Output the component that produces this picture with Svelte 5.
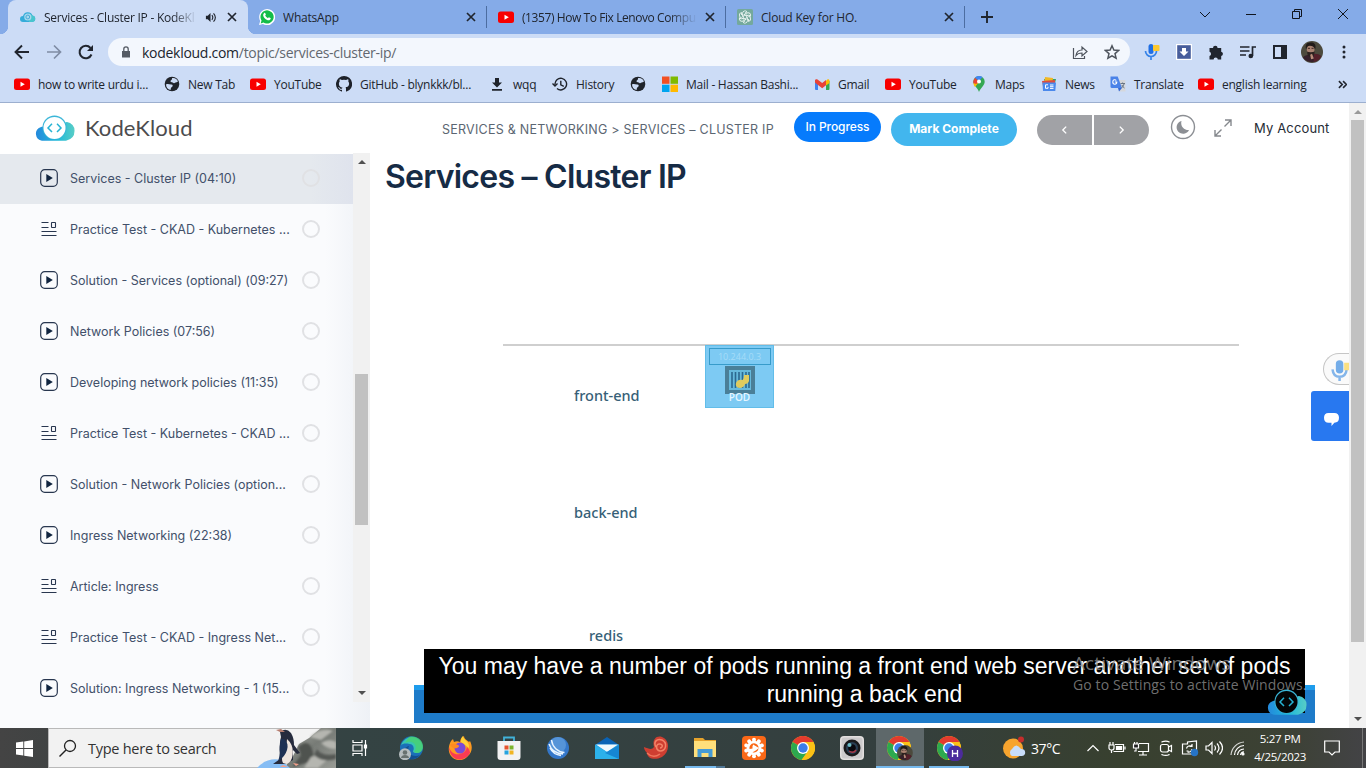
<script>
  const tabs = [
    { icon: 'cloud', title: 'Services - Cluster IP - KodeKl', active: true, sound: true, fade: true },
    { icon: 'whatsapp', title: 'WhatsApp' },
    { icon: 'youtube', title: '(1357) How To Fix Lenovo Compu', fade: true },
    { icon: 'gpt', title: 'Cloud Key for HO.' }
  ];
  const bookmarks = [
    { icon: 'youtube', label: 'how to write urdu i...', w: 150 },
    { icon: 'globe', label: 'New Tab', w: 86 },
    { icon: 'youtube', label: 'YouTube', w: 86 },
    { icon: 'github', label: 'GitHub - blynkkk/bl...', w: 153 },
    { icon: 'download', label: 'wqq', w: 63 },
    { icon: 'history', label: 'History', w: 78 },
    { icon: 'globe', label: '', w: 32 },
    { icon: 'microsoft', label: 'Mail - Hassan Bashi...', w: 152 },
    { icon: 'gmail', label: 'Gmail', w: 71 },
    { icon: 'youtube', label: 'YouTube', w: 86 },
    { icon: 'maps', label: 'Maps', w: 70 },
    { icon: 'news', label: 'News', w: 69 },
    { icon: 'translate', label: 'Translate', w: 88 },
    { icon: 'youtube', label: 'english learning', w: 120 }
  ];
  const lessons = [
    ['video', 'Services - Cluster IP (04:10)'],
    ['list', 'Practice Test - CKAD - Kubernetes ...'],
    ['video', 'Solution - Services (optional) (09:27)'],
    ['video', 'Network Policies (07:56)'],
    ['video', 'Developing network policies (11:35)'],
    ['list', 'Practice Test - Kubernetes - CKAD ...'],
    ['video', 'Solution - Network Policies (option...'],
    ['video', 'Ingress Networking (22:38)'],
    ['list', 'Article: Ingress'],
    ['list', 'Practice Test - CKAD - Ingress Net...'],
    ['video', 'Solution: Ingress Networking - 1 (15...']
  ];
  const apps = ['edge', 'firefox', 'store', 'globeblue', 'mail', 'shell', 'folder', 'orange', 'chrome', 'camera', 'chromeA', 'chromeH'];
  const tray = ['up', 'battery', 'network', 'meet', 'onedrive', 'volume', 'wifi'];
  const petals = [0, 36, 72, 108, 144, 180, 216, 252, 288, 324];
</script>

{#snippet chromeLogo()}
  <circle cx="12" cy="12" r="12" fill="#fbc116" />
  <path d="M12 12 1.6 6A12 12 0 0 1 22.4 6H12z" fill="#e33b2e" />
  <path d="M12 12 1.6 6a12 12 0 0 0 9 17.9L17 15z" fill="#2da94f" />
  <path d="M12 6h10.4a12 12 0 0 1-11.8 17.9L17.2 15z" fill="#fbc116" />
  <circle cx="12" cy="12" r="6" fill="#fff" />
  <circle cx="12" cy="12" r="4.7" fill="#3b7de9" />
{/snippet}

{#snippet portrait()}
  <circle cx="12" cy="12" r="12" fill="#4c4a3d" />
  <path d="M2 18a12 12 0 0 0 20-1c-2-3-5-2-8-3l-5 1c-3 0-5 1-7 3z" fill="#35202a" />
  <path d="M14 14c4 0 7 1 8 3a12 12 0 0 1-8 6z" fill="#54202a" />
  <ellipse cx="10.5" cy="9.5" rx="4.2" ry="5.600" fill="#a98271" />
  <path d="M5.500 9C4 2 8 1.500 11 1.500s6 1.500 4.500 7.500C14 5 9 4.500 7 6z" fill="#211b19" />
  <path d="M6.500 11.500c2 1 6 1 8.500 0-.5 4-2 6-4.500 6s-3.500-2-4-6z" fill="#2b211f" />
  <path d="M7.500 8h2.300M11.500 8h2.300" stroke="#33221d" />
  <path d="m10 15 2-1 2 5-3 1z" fill="#b98c7a" />
{/snippet}

{#snippet cloudLogo(inner)}
  <svg viewBox="0 0 40 27" class="cloud">
    <defs><linearGradient id="cl" x1="0" x2="1"><stop offset="0" stop-color="#2489dc" /><stop offset=".55" stop-color="#20b9d9" /><stop offset="1" stop-color="#58cdc6" /></linearGradient></defs>
    <path d="M7 25.700a7 7 0 0 1-1.500-13.500Q7 11.300 9 11.500H29Q29 7 32 7a8.500 8.500 0 0 1 7.500 9q0 8-8.500 9.700z" fill="url(#cl)" />
    <circle cx="19.500" cy="12.600" r="12" fill="#3ab6d8" />
    <circle cx="19.500" cy="12.900" r="11" fill={inner} />
    <path d="m17 8.800-4 4.100 4 4.100M22 8.800l4 4.100-4 4.100" fill="none" stroke="#26b3d3" stroke-width="1.500" />
  </svg>
{/snippet}

{#snippet icon(name)}
  {#if name === 'cloud'}
    <svg viewBox="0 0 16 16"><path d="M3 13a3 3 0 0 1 0-6 5 5 0 0 1 9.500-.5A3.300 3.300 0 0 1 12.500 13z" fill="#35acd9" /><path d="M9 13V4l3.500 2.500A3.300 3.300 0 0 1 12.500 13z" fill="#49c5ce" /><circle cx="7.800" cy="8" r="3.600" fill="#a6d9ee" /><circle cx="7.800" cy="8" r="1.900" fill="none" stroke="#4aa9d8" /></svg>
  {:else if name === 'whatsapp'}
    <svg viewBox="0 0 16 16"><path d="M0 16 1.200 12A8 8 0 1 1 4 14.900z" fill="#fff" /><path d="m1.700 14.400.8-2.900A6.600 6.600 0 1 1 4.500 13.500z" fill="#13bd48" /><path d="M5 4.200c.5-.7 1.200-.4 1.400.2l.5 1.200-.7 1c.6 1.200 1.400 2 2.700 2.600l.9-.9 1.700.8c.6.3 0 1.600-.8 2-2.600 1-6.700-2.500-6.500-5.200 0-.7.300-1.200.8-1.700z" fill="#fff" /></svg>
  {:else if name === 'youtube'}
    <svg viewBox="0 0 16 16"><rect y="2.500" width="16" height="11.500" rx="2.500" fill="#f80000" /><path d="m6.500 5.800 4.300 2.500-4.300 2.500z" fill="#fff" /></svg>
  {:else if name === 'gpt'}
    <svg viewBox="0 0 16 16"><rect width="16" height="16" rx="1.500" fill="#74a99c" /><g fill="none" stroke="#e8f3ef" stroke-width=".9">{#each [0, 60, 120, 180, 240, 300] as r}<path d="M8 6 5.500 7.500V4.300A2.600 2.600 0 0 1 10 2.700L8 4" transform="rotate({r} 8 8)" />{/each}</g></svg>
  {:else if name === 'globe'}
    <svg viewBox="0 0 16 16"><circle cx="8" cy="8" r="7.300" fill="#20242b" /><path d="M2 8.500c2-1 3.500.2 5.500 0 1.500.2 1.500 1.500.5 2.500-1.500.5-1 2-1.500 3C3.500 13.500 2 11 2 8.500zM8 2c3-.5 5 1 6 3.500l-2 1c-1 0-1.500 1.200-2.500.5C8.500 6 7 6.500 6.500 5.500 6.500 4 8.500 4 8 2z" fill="#ccdcf6" /></svg>
  {:else if name === 'github'}
    <svg viewBox="0 0 16 16"><path d="M8 0a8 8 0 0 0-2.500 15.600c.4.100.5-.2.500-.4v-1.400c-2.200.5-2.700-1-2.700-1-.4-.9-.9-1.200-.9-1.200-.7-.5.100-.5.100-.5.800.100 1.200.8 1.200.8.700 1.300 1.900.9 2.300.7.100-.5.300-.9.500-1.100-1.800-.2-3.600-.9-3.600-4 0-.9.300-1.600.8-2.100-.100-.2-.4-1 .1-2.100 0 0 .7-.2 2.200.8a7.500 7.500 0 0 1 4 0c1.500-1 2.200-.8 2.200-.8.400 1.100.2 1.900.1 2.100.5.600.8 1.300.8 2.200 0 3-1.900 3.700-3.600 3.900.3.300.5.800.5 1.500v2.200c0 .2.100.5.600.4A8 8 0 0 0 8 0z" fill="#1d2129" /></svg>
  {:else if name === 'download'}
    <svg viewBox="0 0 16 16" fill="#1f232b"><path d="M6 2h4v4.500h3l-5 5-5-5h3zM3 13h10v1.700H3z" /></svg>
  {:else if name === 'history'}
    <svg viewBox="0 0 16 16" fill="none" stroke="#1f232b" stroke-width="1.400"><path d="M3 8.500a5.800 5.800 0 1 1 2 4M.5 7.500 3 10l2.500-2.500M8.800 4.800v4l3 1.500" /></svg>
  {:else if name === 'microsoft'}
    <svg viewBox="0 0 16 16"><path d="M0 .5h7.500v7.300H0z" fill="#f25022" /><path d="M8.500.5H16v7.300H8.500z" fill="#7fba00" /><path d="M0 8.700h7.500V16H0z" fill="#00a4ef" /><path d="M8.500 8.700H16V16H8.500z" fill="#ffb900" /></svg>
  {:else if name === 'gmail'}
    <svg viewBox="0 0 16 16"><path d="M1 4h3v10H2a1 1 0 0 1-1-1z" fill="#3f83ee" /><path d="M12 5h3.500v8a1 1 0 0 1-1 1H12z" fill="#34a853" /><path d="m12 5 1.300-1.500c1-.7 2.200 0 2.200 1.200V7L12 9.500z" fill="#fbbc04" /><path d="m1 4.500c.2-1.300 1.500-1.700 2.500-1L8.200 7 12 4v5.300l-3.800 3L4 9 1 6.500z" fill="#e94235" /></svg>
  {:else if name === 'maps'}
    <svg viewBox="0 0 16 16"><path d="M8 0a5.700 5.700 0 0 1 5.700 5.700C13.700 9 9.500 12 8 16 7 12 2.300 9.500 2.300 5.700A5.700 5.700 0 0 1 8 0z" fill="#34a853" /><path d="M2.500 7 8 6l-4 5C3 9.500 2.500 8.500 2.500 7z" fill="#fbbc04" /><path d="M8 0C6 0 4.800.8 4 1.800l4 3.500L11.500 1A6 6 0 0 0 8 0z" fill="#4285f4" /><path d="M4 1.800 2.300 5v2l3 1L8 5.500z" fill="#ea4335" /><circle cx="8" cy="5.600" r="2" fill="#fff" /></svg>
  {:else if name === 'news'}
    <svg viewBox="0 0 16 16"><path d="M3 3h12l-2 8H5z" fill="#33a164" /><path d="m4 1 8 1-1 8H3z" fill="#f1b824" /><path d="m1 5 13-1v6H2z" fill="#de4c3f" /><path d="M1.500 6.500H15l-.7 8.500H2z" fill="#4b89ec" /><path d="M7 8.800H4.500v3.500H7v-1.500M9 9h3.500M9 10.700h3.500M9 12.400h3.500" fill="none" stroke="#fff" /></svg>
  {:else if name === 'translate'}
    <svg viewBox="0 0 16 16"><path d="M6 4h9.500v11.500H9z" fill="#d5d7db" /><path d="M.5.500h7.200L12 12H2a1.500 1.500 0 0 1-1.500-1.500z" fill="#4a82e8" /><path d="m8 12h4l-3 3.500z" fill="#3367d6" /><path d="M4.800 6h2c0 3-4 3-4 0 0-2.200 2.200-3 3.500-1.500" fill="none" stroke="#fff" stroke-width="1.100" /><path d="M10.500 7.500h4.500M12.600 6.500v1M14 8c-.5 2-1.500 3-2.500 4M12 9c.5 1.500 1.500 2.500 2.500 3" fill="none" stroke="#697584" /></svg>
  {/if}
{/snippet}

{#snippet appIcon(name)}
  {#if name === 'edge'}
    <svg viewBox="0 0 24 24"><circle cx="12.500" cy="11.800" r="11.500" fill="#1b6fb8" /><path d="M2 9C6 0 16-2 22 6c3 6 1 10-3 11-4 .5-6-1-4.500-3 1-3-1-6-4-6-5-1-7 0-8.500 1z" fill="#37c5b3" /><path d="M10 1c8-2 15 4 14 11-1 5-6 6-9 4 5-7-2-13-9-9z" fill="#4bd16c" opacity=".75" /><path d="M10 10c-3 7 3 12 11 9-4 5-11 6-16 0-2-4 1-8 5-9z" fill="#124f91" /><circle cx="6" cy="18.200" r="6" fill="#b5bcbe" /><circle cx="6" cy="16.500" r="2.300" fill="#68716f" /><path d="M2 22c0-4 8-4 8 0z" fill="#68716f" /></svg>
  {:else if name === 'firefox'}
    <svg viewBox="0 0 24 24"><path d="M3 5l2-2 1 3c2-1 4-1 6 0 0-3 2-5 4-6 0 3 3 4 5 6l1-1c3 6 2 11-2 15-5 6-13 5-17 0C0 16 0 10 3 5z" fill="#ff9a20" /><path d="M1 11c2 6 6 8 11 7 4-1 6-3 7-7 2 2 3 4 3 6-4 7-13 9-18 3-2-3-3-6-3-9z" fill="#fa3b53" /><path d="M15 0c0 4 7 5 6 12l-4-3-4-3c0-3 0-4 2-6z" fill="#ffd338" /><circle cx="12" cy="12" r="5.500" fill="#7a4bd6" /><path d="M2 9c3-2 5-1 8 0 2 1 1 2-1 3-4 1-5-1-7-3z" fill="#ff8a22" /></svg>
  {:else if name === 'store'}
    <svg viewBox="0 0 24 24"><path d="M7 6V1.500h10V6" fill="none" stroke="#41b2d9" stroke-width="1.800" /><path d="M.5 5h23v16a3 3 0 0 1-3 3h-17a3 3 0 0 1-3-3z" fill="#f2f2f3" /><path d="M7.500 9.500h4v4h-4z" fill="#e5532d" /><path d="M12.500 9.500h4v4h-4z" fill="#7ab42d" /><path d="M7.500 14.500h4v4h-4z" fill="#25a3df" /><path d="M12.500 14.500h4v4h-4z" fill="#f1b522" /></svg>
  {:else if name === 'globeblue'}
    <svg viewBox="0 0 24 24"><circle cx="12" cy="12" r="11" fill="#3477c9" /><circle cx="12" cy="9" r="8" fill="#6da8e2" opacity=".6" /><path d="M3 8c2 6 7 9.500 14 10M5.500 4c1 7 6 12 13 12.500M4 12c2 4 6 7 11 7.500" fill="none" stroke="#e7f4ff" stroke-width="1.500" /></svg>
  {:else if name === 'mail'}
    <svg viewBox="0 0 24 24"><path d="m0 9 12-8 12 8-12 8z" fill="#0a63b5" /><path d="M0 8.500h24V23H0z" fill="#26a3e5" /><path d="M1 8.500h22L12 16z" fill="#f0f8fc" /><path d="m0 9 24 14H0z" fill="#2cb1ea" /><path d="M24 9 10 17l14 6z" fill="#1686d2" /></svg>
  {:else if name === 'shell'}
    <svg viewBox="0 0 24 24"><path d="M0 11c5 2 8 3 10 0C8 4 12-1 18 1c8 3 8 15 0 20C10 25 3 22 3 17c-2-2-3-4-3-6z" fill="#ce3e31" /><path d="M12 11c-3-5 1-9 6-7 6 3 4 11-2 11-5-1-4-8 0-7 4 1 2 4 0 4" fill="none" stroke="#f38368" stroke-width="1.500" /><path d="M3 17c4 4 9 4 13 1" stroke="#ee765c" fill="none" stroke-width="1.500" /></svg>
  {:else if name === 'folder'}
    <svg viewBox="0 0 24 24"><path d="M1 2h9l2 2h11v17H1z" fill="#e6a32c" /><path d="M1 5h22v16H1z" fill="#ffdf7b" /><path d="M4.500 13h15v8h-4v-4h-7v4h-4z" fill="#469bd5" /></svg>
  {:else if name === 'orange'}
    <svg viewBox="0 0 24 24"><rect width="24" height="24" rx="4" fill="#fa6817" />{#each petals as p}<circle cx="12" cy="3.800" r="2" fill="#fff" transform="rotate({p} 12 12)" />{/each}<circle cx="12" cy="12" r="7.300" fill="#fff" /><path d="M7.500 13a4.600 4.600 0 1 1 3 3.300L13 15l4-3-6-3.500v4z" fill="#fa6817" /><path d="m10.500 9.500 4.500 2.500-4.500 2.500z" fill="#fff" /></svg>
  {:else if name === 'chrome'}
    <svg viewBox="0 0 24 24">{@render chromeLogo()}</svg>
  {:else if name === 'camera'}
    <svg viewBox="0 0 24 24"><rect width="24" height="24" rx="4" fill="#e2dfde" /><rect x="1.500" y="1.500" width="21" height="21" rx="3" fill="#cccacb" /><circle cx="12" cy="12" r="8.500" fill="#19191b" /><circle cx="12" cy="12" r="6" fill="#283e53" /><circle cx="12" cy="12" r="3.800" fill="#09090e" /><path d="M9 15c3 2 5 2 7-1" fill="none" stroke="#ab3746" stroke-width="1.400" /><circle cx="9.500" cy="9" r="2" fill="#6dbdc7" /></svg>
  {:else if name === 'chromeA'}
    <svg viewBox="0 0 26 26"><g transform="translate(0 1)">{@render chromeLogo()}</g><g transform="translate(10 10) scale(.66)">{@render portrait()}</g></svg>
  {:else}
    <svg viewBox="0 0 26 26"><g transform="translate(0 1)">{@render chromeLogo()}</g><circle cx="18" cy="18.500" r="8" fill="#4c2b9c" /><path d="M15.500 15v7M20.500 15v7M15.500 18.500h5" stroke="#fff" stroke-width="1.300" /></svg>
  {/if}
{/snippet}

{#snippet trayIcon(name)}
  <svg viewBox="0 0 18 18" fill="none" stroke="#fff" stroke-width="1.200">
    {#if name === 'up'}<path d="m3.500 12 5.500-5.500 5.500 5.500" />
    {:else if name === 'battery'}<path d="M7 5.500h8.500v7H5.500M17 7.500v3M1 6h5v3a2 2 0 0 1-2 2H3a2 2 0 0 1-2-2zM2 6V3M5 6V3M3.500 11v3" /><path d="M8.500 7.500h5v3h-5z" fill="#fff" />
    {:else if name === 'network'}<path d="M7 4.500h9.500v8H6M11 12.500V16M7 16h8" /><path d="M1.500 5h5v4h-5zM4 9v3H2M2.500 5V3M5 5V3" fill="#222" />
    {:else if name === 'meet'}<rect x="3.500" y="5.500" width="8" height="7.500" rx="2" /><path d="m11.500 8 3-1.500v6l-3-1.500M5 3.500V2.800q4-1.500 7 0v.7M5 15v.7q4 1.500 7 0V15" />
    {:else if name === 'onedrive'}<path d="M1.500 5v10h14V2l-9 1v2zM1.500 5h5" /><path d="M5.500 9.500a3.500 3.500 0 0 1 5.500-2M11 5v2.500H8.500M5.500 12h2M11 10a3.500 3.500 0 0 1-4.500 3" /><circle cx="13.500" cy="13.500" r="3.700" fill="#2674c6" stroke="none" />
    {:else if name === 'volume'}<path d="M1 7h2.500L7 3.500v11L3.500 11H1zM9.500 6.500q2 2.500 0 5M12 4.500q4 4.500 0 9M14.500 2.500q6 6.500 0 13" />
    {:else}<path d="M2 16A14 14 0 0 1 15 3" opacity=".8" /><path d="M5.500 16A10 10 0 0 1 15 6.500M8.500 16A7 7 0 0 1 15 10M11.500 16a4 4 0 0 1 3.500-3.200" /><circle cx="14" cy="15" r="1" fill="#fff" />{/if}
  </svg>
{/snippet}

<div class="screen">
  <div class="tabstrip">
    {#each tabs as tab, i}
      <div class="tab t{i}" class:active={tab.active}>
        <span class="ic">{@render icon(tab.icon)}</span>
        <span class="title" class:fade={tab.fade}>{tab.title}</span>
        {#if tab.sound}
          <svg class="sound" viewBox="0 0 12 12"><path d="M1 4h2l3-3v10L3 8H1z" fill="#20252e" /><path d="M7.500 3.500q2 2.500 0 5M9.300 1.500q4 4.500 0 9" fill="none" stroke="#20252e" stroke-width="1.200" /></svg>
        {/if}
        <svg class="x" viewBox="0 0 10 10"><path d="m1 1 8 8M9 1 1 9" stroke="#20252e" stroke-width="1.700" /></svg>
      </div>
    {/each}
    <svg class="plus" viewBox="0 0 12 12"><path d="M6 0v12M0 6h12" stroke="#20252e" stroke-width="1.900" /></svg>
    <div class="wincontrols">
      <svg viewBox="0 0 12 12"><path d="m1 4 5 5 5-5" /></svg>
      <svg viewBox="0 0 12 12"><path d="M1 6.500h10" /></svg>
      <svg viewBox="0 0 12 12"><path d="M1.500 3.500h7v7h-7zM3.500 3.500v-2h7v7h-2" /></svg>
      <svg viewBox="0 0 12 12"><path d="m1 1 10 10M11 1 1 11" /></svg>
    </div>
  </div>

  <div class="toolbar">
    <svg class="nav" viewBox="0 0 16 16"><path d="M15 8H2M8 1.500 1.500 8 8 14.500" fill="none" stroke="#20252e" stroke-width="1.900" /></svg>
    <svg class="nav" viewBox="0 0 16 16"><path d="M1 8h13M8 1.500 14.500 8 8 14.500" fill="none" stroke="#7f8ca4" stroke-width="1.700" /></svg>
    <svg class="nav" viewBox="0 0 16 16"><path d="M13.500 10.500A6.200 6.200 0 1 1 12.500 4" fill="none" stroke="#20252e" stroke-width="2" /><path d="M15 1v6H9z" fill="#20252e" /></svg>
    <div class="omnibox">
      <svg class="lock" viewBox="0 0 10 12"><path d="M1 5h8v6.500H1z" fill="#555b64" /><path d="M2.800 5V3a2.200 2.200 0 0 1 4.400 0v2" fill="none" stroke="#555b64" stroke-width="1.300" /></svg>
      <span class="url">kodekloud.com<em>/topic/services-cluster-ip/</em></span>
      <svg class="share" viewBox="0 0 16 16" fill="none" stroke="#4e545d" stroke-width="1.200"><path d="M1.500 4v10.500h11V12" /><path d="M4 11.500c.5-4 3-5.500 6-5.500V3l5 4.500-5 4.500V9c-2.500 0-4.500.5-6 2.500z" /></svg>
      <svg class="star" viewBox="0 0 16 16" fill="none" stroke="#4e545d" stroke-width="1.500"><path d="m8 1.800 1.900 4.300 4.700.4-3.600 3.100 1.100 4.600L8 11.800l-4.100 2.400L5 9.600 1.400 6.500l4.700-.4z" /></svg>
    </div>
    <div class="exts">
      <svg viewBox="0 0 16 16"><rect x="4.500" y="0" width="5" height="10" rx="2.500" fill="#1f6fe5" /><path d="M1.500 7a5.500 5.500 0 0 0 11 0M7 12.500V16" fill="none" stroke="#3583e8" stroke-width="1.700" /><rect x="9" y="1" width="6.500" height="6" rx="1" fill="#fcc82e" /></svg>
      <svg viewBox="0 0 16 16"><path d="M0 0h16v16H0z" fill="#fff" /><path d="M1.200 1.200h13.600v13.600H1.200z" fill="#475d9b" /><path d="M6 4h4v3.500h2.500L8 12 3.500 7.500H6z" fill="#fff" /></svg>
      <svg viewBox="0 0 16 16"><path d="M1.500 4H5a2.300 2.300 0 0 1 4.600 0h3.600v3.700a2.200 2.200 0 0 1 0 4.300v3.500H9.800a2.100 2.100 0 0 0-4.200 0H1.500V12a2.200 2.200 0 0 0 0-4.200z" fill="#20252e" /></svg>
      <svg viewBox="0 0 16 16" fill="none" stroke="#20252e" stroke-width="1.700"><path d="M0 3h9.500M0 7h9.500M0 11h6M12.500 12V3H16" /><circle cx="10.800" cy="12" r="1.500" fill="#20252e" /></svg>
      <svg viewBox="0 0 16 16"><path d="M2 2h12v12H2z" fill="none" stroke="#20252e" stroke-width="2" /><path d="M9 1h6v14H9z" fill="#20252e" /></svg>
      <svg class="me" viewBox="0 0 24 24">{@render portrait()}</svg>
      <svg viewBox="0 0 16 16" fill="#20252e"><circle cx="8" cy="3" r="1.500" /><circle cx="8" cy="8" r="1.500" /><circle cx="8" cy="13" r="1.500" /></svg>
    </div>
  </div>

  <div class="bookmarks">
    {#each bookmarks as b}
      <div class="bm" style:width="{b.w}px"><span class="ic">{@render icon(b.icon)}</span><span>{b.label}</span></div>
    {/each}
    <svg class="more" viewBox="0 0 8 8"><path d="m.8 1 3 3-3 3M4.500 1l3 3-3 3" fill="none" stroke="#20252e" stroke-width="1.400" /></svg>
  </div>

  <div class="page">
    <div class="site">
      <header>
        <span class="logo">{@render cloudLogo('#fff')}</span>
        <span class="brand">KodeKloud</span>
        <span class="crumbs">SERVICES &amp; NETWORKING &gt; SERVICES – CLUSTER IP</span>
        <span class="progress">In Progress</span>
        <span class="complete">Mark Complete</span>
        <div class="pager">
          <span><svg viewBox="0 0 8 8"><path d="M5.500 1 2.500 4l3 3" /></svg></span>
          <span><svg viewBox="0 0 8 8"><path d="m2.500 1 3 3-3 3" /></svg></span>
        </div>
        <svg class="moon" viewBox="0 0 26 26"><circle cx="13" cy="13" r="11.500" fill="none" stroke="#8c8f94" stroke-width="1.400" /><path d="M11.500 7a7 7 0 0 0 7.500 9 6.500 6.500 0 1 1-7.500-9z" fill="#8c8f94" /></svg>
        <svg class="expand" viewBox="0 0 18 18" fill="none" stroke="#85888d" stroke-width="1.400"><path d="M1 17 7.500 10.500M10.500 7.500 17 1M11 1h6v6M1 11v6h6" /></svg>
        <span class="account">My Account</span>
      </header>
      <div class="body">
        <aside>
          <div class="lessons">
            {#each lessons as [kind, label], i}
              <div class="lesson" class:current={i === 0}>
                {#if kind === 'video'}
                  <svg class="li" viewBox="0 0 18 18"><rect x=".7" y=".7" width="16.600" height="16.600" rx="4" fill="none" stroke="#28364f" stroke-width="1.200" /><path d="M6.300 5v8l6.500-4z" fill="#10243f" /></svg>
                {:else}
                  <svg class="li" viewBox="0 0 18 18" fill="none" stroke="#28364f" stroke-width="1.100"><path d="M1.500 2.500h7M1.500 7.500h7M1.500 11.500h15M1.500 15.500h15" /><rect x="11.500" y="2.500" width="4" height="5" rx=".5" /></svg>
                {/if}
                <span>{label}</span><i></i>
              </div>
            {/each}
          </div>
          <div class="sidebar-scroll"><b class="up"></b><div></div><b class="down"></b></div>
        </aside>
        <main>
          <h1>Services – Cluster IP</h1>
          <div class="video">
            <div class="rule"></div>
            <span class="tier front">front-end</span>
            <span class="tier back">back-end</span>
            <span class="tier redis">redis</span>
            <div class="pod">
              <span class="addr">10.244.0.3</span>
              <svg viewBox="0 0 30 28"><path d="M2 2h26v24H2z" fill="#66b9dc" stroke="#4a7f98" stroke-width="4" /><path d="M7 6v16M10.500 6v16M14 6v16M17.500 6v16M21 6v16M24 6v16" stroke="#2b688f" stroke-width="1.600" /><path d="M19 9h5v6q-1 3-4 3-1 4-6 4-4-1-3-5 2-4 6-3 2 0 2-5z" fill="#dfcb5e" /></svg>
              <strong>POD</strong>
            </div>
            <div class="bluebar"></div>
            <p class="caption">You may have a number of pods running a front end web server another set of pods<br />running a back end</p>
            <div class="watermark"><div>Activate Windows</div><p>Go to Settings to activate Windows.</p></div>
            <span class="badge">{@render cloudLogo('#030506')}</span>
          </div>
          <div class="mic"><svg viewBox="0 0 24 26"><rect x="7" y="0" width="9" height="16" rx="4.500" fill="#74ade9" /><path d="M3 11q1 9 8.500 9T20 11M11.500 20v5" fill="none" stroke="#85b6ea" stroke-width="3" /><path d="M17 3h8v9h-8z" fill="#fbe082" /></svg></div>
          <div class="chat"><svg viewBox="0 0 18 16"><path d="M6 1h6q5 0 5 5.200T12 11.500L9 15v-3.500H6Q1 11.500 1 6.200T6 1z" fill="#fff" /></svg></div>
        </main>
      </div>
    </div>
    <div class="page-scroll"><b class="up"></b><div></div><b class="down"></b></div>
  </div>

  <div class="taskbar">
    <div class="start"><svg viewBox="0 0 17 17"><path d="M0 2.500 7.300 1.500v6.600H0zM8.200 1.400 17 0v8.100H8.200zM0 9h7.300v6.600L0 14.600zM8.200 9H17v8l-8.800-1.300z" fill="#fff" /></svg></div>
    <div class="search">
      <svg class="glass" viewBox="0 0 18 18"><circle cx="11" cy="7" r="5.500" fill="none" stroke="#222" stroke-width="1.300" /><path d="m7 11-6.500 6.500" stroke="#222" stroke-width="1.400" /></svg>
      <span>Type here to search</span>
      <svg class="penguin" viewBox="0 0 80 40">
        <defs><linearGradient id="rock" x1="0" y1="0" x2="1" y2="1"><stop offset="0" stop-color="#a8aaa3" /><stop offset=".5" stop-color="#777b76" /><stop offset="1" stop-color="#999c96" /></linearGradient><filter id="soft"><feGaussianBlur stdDeviation=".8" /></filter></defs>
        <path d="M80 0H65L53 10 43 16 37 28 28 40h52z" fill="url(#rock)" />
        <g filter="url(#soft)"><path d="M42 19q10-9 14 2t-6 14l-14 4 9-12z" fill="#50534f" /><path d="M54 9Q65-1 77 3L65 12zM65 15q8-5 15-1v7q-9 0-15-6zM55 29q12-4 15 4l-8 7H48z" fill="#b5b6b0" />
        <path d="M61 21q5 8 19 5v5q-14 4-22-4z" fill="#555855" /></g>
        <path d="M1 40q10-11 24-8l9 8z" fill="#86bdf4" />
        <path d="M24 4q6-5 11 1 3 5 3 12l6 8-3 1-4-4v10l-8 4-12 0 7-5q-1-15 1-22z" fill="#262b3d" /><path d="M31 11q8 7 5 19-3 8-9 5-2-3 0-10 4-8 4-14z" fill="#eee5df" /><path d="M25 11q-2 8-1 14-1 6-2 8 7-4 9-11 2-7-3-11z" fill="#1e3154" /><path d="m24 4-4-2 5-1 4 3z" fill="#b67d6f" /><path d="m27 37-3 2h8zM37 35l6 1-3 2" fill="#f1a08a" />
      </svg>
    </div>
    <div class="taskview"><svg viewBox="0 0 16 16" fill="none" stroke="#fff" stroke-width="1.200"><path d="M1 0v2.500h9V0M1 16v-2.500h9V16M1 5h9v6H1zM13.500 0v16" /><path d="M12.500 5h2v3h-2z" fill="#fff" /></svg></div>
    <div class="apps">
      {#each apps as a}
        <div class="app {a}">{@render appIcon(a)}</div>
      {/each}
    </div>
    <div class="weather"><svg viewBox="0 0 24 24"><circle cx="11" cy="12.500" r="10" fill="#f7a42e" /><circle cx="19" cy="3.500" r="3" fill="#c52e2c" /><path d="M10 20a4 4 0 0 1 0-7q4-7 9 0 5 0 4 5-1 2-3 2z" fill="#c8ddfa" /></svg><span>37°C</span></div>
    <div class="tray">{#each tray as t}{@render trayIcon(t)}{/each}</div>
    <div class="clock"><span>5:27 PM</span><span>4/25/2023</span></div>
    <svg class="notify" viewBox="0 0 16 16"><path d="M.7 1h14.600v11H11l-3 3-3-3H.7z" fill="none" stroke="#fff" stroke-width="1.200" /></svg>
    <div class="peek"></div>
  </div>
</div>

<style>
  :global(body) { margin: 0; }
  .screen { width: 1366px; height: 768px; display: flex; flex-direction: column; overflow: hidden; font-family: "Open Sans", sans-serif; color: #20252e; }
  .screen :global(svg) { display: block; flex: none; }
  .screen span { white-space: nowrap; }
  .tabstrip { height: 34px; background: #85abe8; display: flex; align-items: center; padding-left: 8px; flex: none; }
  .tab { height: 34px; box-sizing: border-box; display: flex; align-items: center; font-size: 12px; letter-spacing: -.2px; width: 239px; padding: 0 10px 0 9px; position: relative; }
  .tab.active { background: #ccdcf6; border-radius: 8px 8px 0 0; width: 240px; padding-right: 11px; padding-left: 12px; }
  .tab.active::before, .tab.active::after { content: ''; position: absolute; bottom: 0; width: 8px; height: 8px; }
  .tab.active::before { left: -8px; background: radial-gradient(circle at 0 0, #85abe8 8px, #ccdcf6 8.500px); }
  .tab.active::after { right: -8px; background: radial-gradient(circle at 100% 0, #85abe8 8px, #ccdcf6 8.500px); }
  .tab.t1 { width: 238px; padding-right: 10px; padding-left: 11px; }
  .tab.t2 { padding-left: 11px; }
  .tab.t2, .tab.t3 { border-left: 1px solid #4c6da1; border-image: linear-gradient(#85abe8 20%, #4c6da1 20% 80%, #85abe8 80%) 1; }
  .tab.t3 { padding-left: 11px; border-right: 1px solid; width: 240px; }
  .ic { width: 16px; height: 16px; flex: none; margin-right: 8px; }
  .title { flex: 1; overflow: hidden; margin-right: 8px; }
  .title.fade { mask-image: linear-gradient(90deg, #000 84%, transparent); }
  .t0 .title { letter-spacing: -.25px; }
  .t2 .title { letter-spacing: -.42px; margin-right: 8px; }
  .sound { width: 11px; height: 11px; margin-right: 11px; }
  .x { width: 10px; height: 10px; }
  .plus { width: 12px; height: 12px; margin-left: 16px; }
  .wincontrols { margin-left: auto; display: flex; gap: 34px; padding-right: 17px; margin-top: -6px; }
  .wincontrols svg { width: 12px; height: 12px; fill: none; stroke: #10151e; stroke-width: 1; }
  .toolbar { height: 36px; background: #ccdcf6; display: flex; align-items: center; padding-left: 14px; flex: none; }
  .nav { width: 16px; height: 16px; margin-right: 16px; }
  .omnibox { width: 1022px; height: 28px; background: #f3f7fd; border-radius: 14px; display: flex; align-items: center; box-sizing: border-box; padding: 0 10px 0 13px; margin-left: -2px; }
  .lock { width: 10px; height: 12px; margin-right: 11px; }
  .url { font-size: 14px; letter-spacing: -.28px; flex: 1; }
  .url em { font-style: normal; color: #62676f; }
  .share { width: 16px; height: 16px; margin-right: 16px; }
  .star { width: 16px; height: 16px; }
  .exts { display: flex; align-items: center; gap: 16px; padding-left: 14px; }
  .exts svg { width: 16px; height: 16px; }
  .exts .me { width: 22px; height: 22px; margin: 0 -3px; }
  .bookmarks { height: 32px; box-sizing: content-box; border-bottom: 1px solid #9cafcf; background: #ccdcf6; display: flex; align-items: center; padding-left: 14px; font-size: 12px; letter-spacing: -.25px; flex: none; }
  .bm { display: flex; align-items: center; height: 28px; margin-top: -4px; flex: none; }
  .more { width: 9px; height: 9px; margin-left: 20px; margin-top: -4px; }
  .page { flex: 1; display: flex; min-height: 0; background: #fff; }
  .site { width: 1349px; display: flex; flex-direction: column; }
  header { height: 51px; display: flex; align-items: flex-start; font-family: Inter, sans-serif; flex: none; }
  .logo { width: 40px; height: 27px; margin: 12px 0 0 35px; }
  .brand { font-family: Lato, sans-serif; font-size: 22px; line-height: 26px; letter-spacing: .1px; color: #4c4c4e; width: 107px; margin: 12px 0 0 10px; }
  .crumbs { margin: 18px 0 0 250px; width: 332px; font-size: 12.500px; line-height: 17px; color: #5b6672; letter-spacing: .24px; }
  .progress { width: 87px; height: 30px; border-radius: 15px; background: #067bfc; color: #fff; font-size: 12px; letter-spacing: -.1px; font-weight: 500; line-height: 30px; text-align: center; margin: 9px 0 0 20px; }
  .complete { width: 126px; height: 33px; border-radius: 17px; background: #42b6ee; color: #fff; font-size: 12px; font-weight: 700; line-height: 32px; text-align: center; margin: 10px 0 0 10px; }
  .pager { display: flex; gap: 2px; margin: 12px 0 0 20px; }
  .pager span { width: 55px; height: 30px; background: #a1a2a6; border-radius: 15px 0 0 15px; display: grid; place-items: center; }
  .pager span + span { border-radius: 0 15px 15px 0; }
  .pager svg { width: 9px; height: 10px; fill: none; stroke: #fff; stroke-width: 1.200; }
  .moon { width: 26px; height: 26px; margin: 11px 0 0 21px; }
  .expand { width: 18px; height: 18px; margin: 16px 0 0 18px; }
  .account { font-size: 13px; line-height: 18px; color: #252b35; margin: 16px 0 0 22px; letter-spacing: .15px; }
  .body { flex: 1; display: flex; min-height: 0; }
  aside { width: 370px; display: flex; background: linear-gradient(90deg, #fafbfd 88%, #eef1f6); flex: none; }
  .lessons { width: 353px; overflow: hidden; }
  .lesson { height: 51px; display: flex; align-items: flex-start; padding-top: 15px; padding-left: 40px; box-sizing: border-box; font-family: Inter, sans-serif; font-size: 12.500px; color: #42506a; }
  .lesson.current { background: linear-gradient(90deg, #e5e9ee 88%, #dfe3ed); background-size: 100% 50px; background-repeat: no-repeat; }
  .li { width: 18px; height: 18px; }
  .lesson span { margin-left: 12px; width: 232px; line-height: 19px; }
  .lesson i { width: 14px; height: 14px; border: 2px solid #e0e1e4; border-radius: 50%; flex: none; }
  .sidebar-scroll, .page-scroll { width: 17px; background: #f1f1f1; display: flex; flex-direction: column; align-items: center; }
  .sidebar-scroll { height: 549px; margin-top: -1px; }
  .sidebar-scroll div { width: 13px; height: 151px; background: #c1c1c1; margin-top: 210px; }
  .page-scroll div { width: 13px; height: 522px; background: #c1c1c1; margin-top: 6px; }
  b.up, b.down { border: 4px solid transparent; width: 0; height: 0; }
  b.up { border-bottom-color: #505050; border-top: 0; margin-top: 7px; }
  b.down { border-top-color: #505050; border-bottom: 0; margin-top: auto; margin-bottom: 7px; }
  .page-scroll b.up { border-bottom-color: #999; margin-top: 7px; }
  main { flex: 1; position: relative; }
  h1 { font-family: Inter, sans-serif; font-size: 32px; font-weight: 600; line-height: 38px; letter-spacing: -.75px; color: #162b45; margin: 4px 0 0 15px; }
  .video { position: absolute; inset: 0; }
  .rule { position: absolute; left: 133px; top: 190px; width: 736px; height: 2px; background: #cfcfcf; }
  .tier { position: absolute; left: 204px; font-family: "Noto Sans", sans-serif; font-size: 14.500px; font-weight: 500; line-height: 20px; color: #375f77; }
  .front { top: 231px; }
  .back { top: 348px; }
  .redis { left: 219px; top: 471px; }
  .pod { position: absolute; left: 335px; top: 191px; width: 69px; height: 63px; background: #7dcaf3; border: 1px solid #62bde9; box-sizing: border-box; display: flex; flex-direction: column; align-items: center; }
  .addr { width: 60px; height: 15px; border: 1px solid #379bca; font-size: 9px; line-height: 16px; color: #a5dcf8; text-align: center; margin-top: 2px; }
  .pod svg { width: 30px; height: 28px; margin-top: 1px; }
  .pod strong { color: #e7f6ff; font-size: 10px; line-height: 10px; font-weight: 600; margin-top: -2px; }
  .bluebar { position: absolute; left: 44px; top: 531px; width: 901px; height: 38px; background: linear-gradient(#1e9cec 5px, #1e7bc9 5px); }
  .caption { position: absolute; left: 54px; top: 495px; width: 881px; height: 64px; box-sizing: border-box; padding-top: 3px; margin: 0; background: #000; color: #fff; font: 23px/28px "Liberation Sans", sans-serif; text-align: center; white-space: nowrap; }
  .watermark { position: absolute; left: 703px; top: 496px; color: #8d8d8dcc; white-space: nowrap; }
  .watermark div { font-size: 19px; line-height: 26px; letter-spacing: .1px; }
  .watermark p { margin: 0; font-size: 14px; line-height: 18px; letter-spacing: .12px; }
  .badge { position: absolute; left: 897px; top: 535px; width: 40px; height: 27px; }
  .mic { position: absolute; right: 0; top: 199px; width: 26px; height: 32px; border: 1px solid #c6c6c6; border-right: 0; box-sizing: border-box; border-radius: 16px 0 0 16px; background: #fafafa; overflow: hidden; }
  .mic svg { width: 20px; height: 22px; margin: 6px 0 0 6px; }
  .chat { position: absolute; right: 0; top: 237px; width: 38px; height: 50px; background: #2878f0; border-radius: 3px 0 0 3px; display: grid; place-items: center; }
  .chat svg { width: 17px; height: 15px; margin: 6px 0 0 2px; }
  .taskbar { height: 40px; flex: none; display: flex; align-items: center; background: linear-gradient(90deg, #444 0, #404343 4%, #344343 26%, #343f3e 65%, #38402f 82%, #3c4134 94%, #434346); }
  .start { width: 48px; display: grid; place-items: center; }
  .start svg { width: 17px; height: 17px; }
  .search { width: 288px; height: 40px; background: #f2f2f2; border: 1px solid #b9b9b9; border-right: 0; box-sizing: border-box; display: flex; align-items: center; }
  .glass { width: 18px; height: 18px; margin: 0 11px 0 10px; }
  .search span { font-size: 14.500px; letter-spacing: -.26px; color: #333; width: 168px; }
  .penguin { width: 80px; height: 40px; }
  .taskview { width: 48px; display: grid; place-items: center; }
  .taskview svg { width: 16px; height: 16px; }
  .apps { display: flex; margin-left: 2px; width: 587px; }
  .app { width: 49px; height: 40px; display: grid; place-items: center; box-sizing: border-box; flex: none; }
  .app :global(svg) { width: 24px; height: 24px; }
  .folder { background: linear-gradient(90deg, #76b9ed 78%, #507795 78%) no-repeat 5px 38px / 40px 2px; }
  .chromeA { background: linear-gradient(#5e686a 38px, #76b9ed 38px); width: 48px; }
  .chromeH { background: linear-gradient(#76b9ed, #76b9ed) no-repeat 5px 38px / 40px 2px; }
  .chromeA :global(svg), .chromeH :global(svg) { width: 26px; height: 26px; }
  .chromeH :global(svg) { margin-left: 3px; }
  .weather { display: flex; align-items: center; color: #fff; font-size: 14px; letter-spacing: -.4px; width: 82px; margin-left: 29px; }
  .weather svg { width: 24px; height: 24px; margin-right: 5px; }
  .tray { display: flex; gap: 6.200px; }
  .tray :global(svg) { width: 18px; height: 18px; }
  .clock { width: 54px; display: flex; flex-direction: column; align-items: center; color: #fff; font-size: 11.500px; line-height: 18px; letter-spacing: -.3px; margin-left: 6px; }
  .notify { width: 16px; height: 16px; margin-left: 17px; }
  .peek { width: 1px; height: 40px; background: #777; margin-left: auto; margin-right: 3px; }
</style>
